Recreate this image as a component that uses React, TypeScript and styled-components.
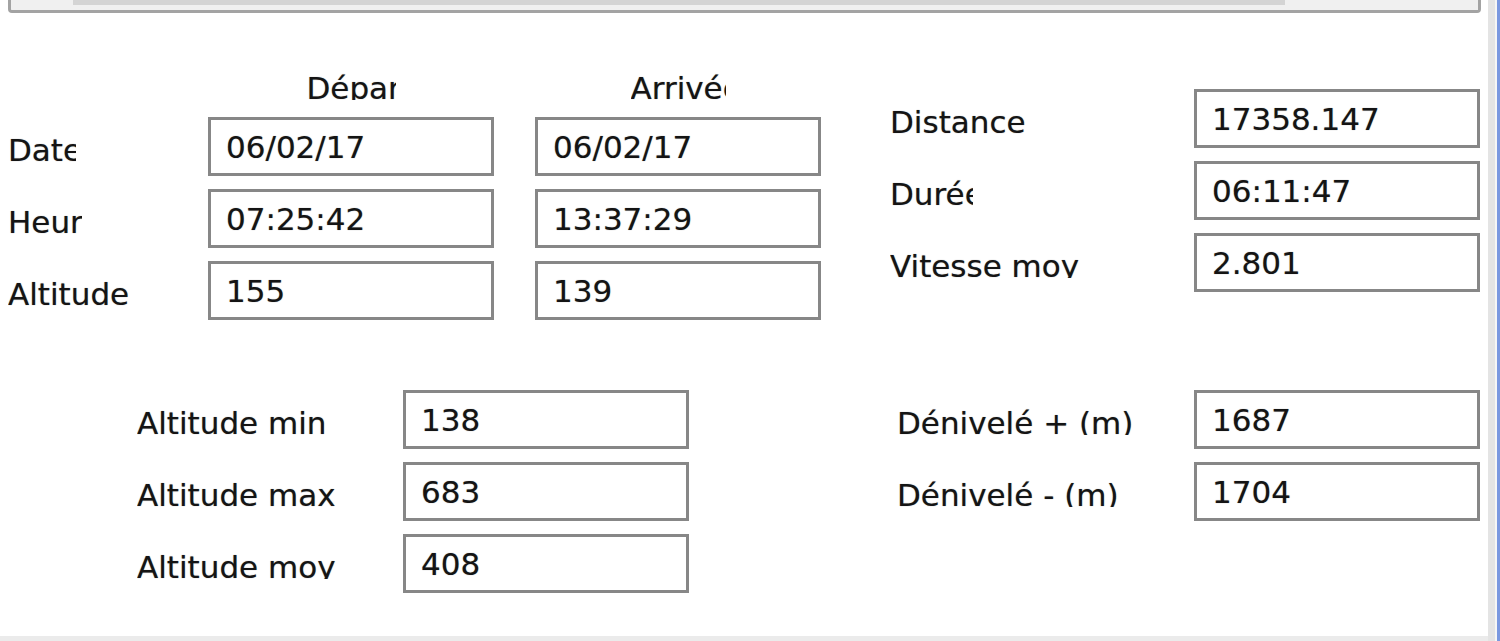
import styled, { createGlobalStyle } from 'styled-components'

const GlobalStyle = createGlobalStyle`
  html, body {
    margin: 0;
    padding: 0;
    background: #ffffff;
    overflow: hidden;
  }
  body {
    font-family: "DejaVu Sans", Verdana, sans-serif;
    color: #141414;
  }
`

const timeRows = [
  { label: 'Date', clip: 68, start: '06/02/17', end: '06/02/17' },
  { label: 'Heure', clip: 74, start: '07:25:42', end: '13:37:29' },
  { label: 'Altitude', start: '155', end: '139' },
]

const trackStats = [
  { label: 'Distance', value: '17358.147' },
  { label: 'Durée', clip: 83, value: '06:11:47' },
  { label: 'Vitesse moy', value: '2.801' },
]

const altitudeStats = [
  { label: 'Altitude min', value: '138' },
  { label: 'Altitude max', value: '683' },
  { label: 'Altitude moy', value: '408' },
]

const climbStats = [
  { label: 'Dénivelé + (m)', value: '1687' },
  { label: 'Dénivelé - (m)', value: '1704' },
]

type Stat = { label: string; value: string; clip?: number }

const StatBlock = ({ items, labelWidth, left, top }: { items: Stat[]; labelWidth: number; left: number; top?: number }) => (
  <StatGrid $labelWidth={labelWidth} $left={left} $top={top || 0}>
    {items.map((item) => (
      <Row key={item.label}>
        <LabelCell>
          <LabelText $clip={item.clip}>{item.label}</LabelText>
        </LabelCell>
        <Field>{item.value}</Field>
      </Row>
    ))}
  </StatGrid>
)

const App = () => {
  return (
    <>
      <GlobalStyle />
      <Window>
        <Client>
          <TopStrip>
            <Track />
          </TopStrip>

          <Upper>
            <TimeGrid>
              <span />
              <HeadCell>
                <HeadLabel $width={89}>Départ</HeadLabel>
              </HeadCell>
              <HeadCell>
                <HeadLabel $width={95}>Arrivée</HeadLabel>
              </HeadCell>
              {timeRows.map((row) => (
                <Row key={row.label}>
                  <LabelCell>
                    <LabelText $clip={row.clip}>{row.label}</LabelText>
                  </LabelCell>
                  <Field>{row.start}</Field>
                  <Field>{row.end}</Field>
                </Row>
              ))}
            </TimeGrid>
            <StatBlock items={trackStats} labelWidth={304} left={69} top={76} />
          </Upper>

          <Lower>
            <StatBlock items={altitudeStats} labelWidth={266} left={137} />
            <StatBlock items={climbStats} labelWidth={297} left={208} />
          </Lower>

          <Filler />
          <BottomBand />
        </Client>
        <EdgeGray />
        <EdgeGap />
        <EdgeBlue />
      </Window>
    </>
  )
}

export default App

const Window = styled.div`
  display: flex;
  width: 1500px;
  height: 641px;
  background: #ffffff;
`

const Client = styled.div`
  display: flex;
  flex-direction: column;
  width: 1488px;
  height: 641px;
`

const TopStrip = styled.div`
  box-sizing: border-box;
  margin-left: 8px;
  width: 1473px;
  height: 13px;
  background: #f0f0f0;
  border: 3px solid #a3a3a3;
  border-top: none;
  border-radius: 0 0 4px 4px;
  padding-left: 62px;
`

const Track = styled.div`
  width: 1212px;
  height: 5px;
  background: #d4d4d4;
`

const Upper = styled.div`
  display: flex;
  align-items: flex-start;
`

const TimeGrid = styled.div`
  display: grid;
  grid-template-columns: 159px 286px 286px;
  grid-template-rows: 34px repeat(3, 59px);
  column-gap: 41px;
  row-gap: 13px;
  margin: 57px 0 0 8px;
`

const Row = styled.div`
  display: contents;
`

const HeadCell = styled.div`
  display: flex;
  justify-content: center;
`

const textLook = `
  font-size: 31px;
  line-height: 36px;
  white-space: nowrap;
  text-shadow: 0 0 1px rgba(0, 0, 0, 0.45);
`

const HeadLabel = styled.span<{ $width: number }>`
  ${textLook}
  display: block;
  width: ${(p) => p.$width}px;
  height: 30px;
  overflow: hidden;
`

const StatGrid = styled.div<{ $labelWidth: number; $left: number; $top: number }>`
  display: grid;
  grid-template-columns: ${(p) => p.$labelWidth}px 286px;
  grid-auto-rows: 59px;
  row-gap: 13px;
  margin: ${(p) => p.$top}px 0 0 ${(p) => p.$left}px;
`

const LabelCell = styled.div`
  padding-top: 15px;
`

const LabelText = styled.span<{ $clip?: number }>`
  ${textLook}
  display: block;
  width: ${(p) => (p.$clip ? `${p.$clip}px` : 'auto')};
  height: 30px;
  overflow: hidden;
`

const Field = styled.div`
  ${textLook}
  box-sizing: border-box;
  height: 59px;
  border: 3px solid #878787;
  background: #ffffff;
  padding: 9px 0 0 15px;
`

const Lower = styled.div`
  display: flex;
  align-items: flex-start;
  margin-top: 70px;
`

const Filler = styled.div`
  flex: 1;
`

const BottomBand = styled.div`
  height: 5px;
  background: #ebebeb;
`

const EdgeGray = styled.div`
  width: 7px;
  background: #e4e4e4;
`

const EdgeGap = styled.div`
  width: 2px;
  background: #f6f6f6;
`

const EdgeBlue = styled.div`
  width: 3px;
  background: #7a98e0;
`
